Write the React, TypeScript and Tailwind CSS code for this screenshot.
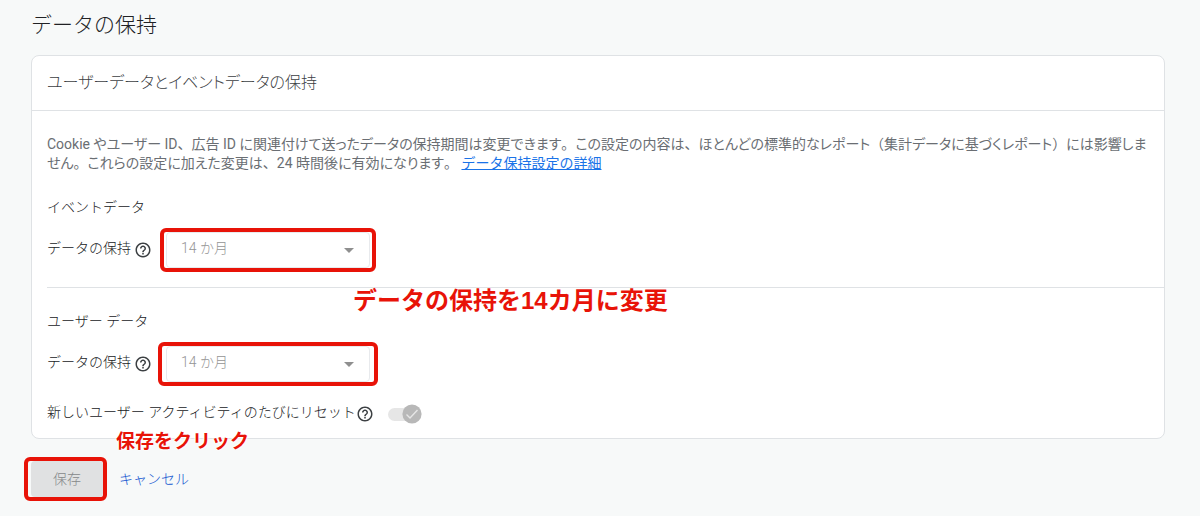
import { useState, type ReactNode } from "react";

function HelpIcon() {
  return (
    <svg
      viewBox="0 0 24 24"
      className="size-[18px] shrink-0 fill-[#3c4043]"
      aria-hidden="true"
    >
      <path d="M11 18h2v-2h-2v2zm1-16C6.48 2 2 6.48 2 12s4.48 10 10 10 10-4.48 10-10S17.52 2 12 2zm0 18c-4.41 0-8-3.59-8-8s3.59-8 8-8 8 3.59 8 8-3.59 8-8 8zm0-14c-2.21 0-4 1.79-4 4h2c0-1.1.9-2 2-2s2 .9 2 2c0 2-3 1.75-3 5h2c0-2.25 3-2.5 3-5 0-2.21-1.79-4-4-4z" />
    </svg>
  );
}

// full-width punctuation inside proportional kana text
function Wide({ children }: { children: ReactNode }) {
  return <span className="[font-feature-settings:normal]">{children}</span>;
}

type RetentionRowProps = {
  id: string;
  frame: string;
};

function RetentionRow({ id, frame }: RetentionRowProps) {
  const [months, setMonths] = useState("14");
  return (
    <div className="flex h-9 items-center">
      <label htmlFor={id} className="w-[87px] whitespace-nowrap pb-1">
        データの保持
      </label>
      <HelpIcon />
      <div className="relative ml-[14px] w-[204px]">
        <select
          id={id}
          disabled
          value={months}
          onChange={(e) => setMonths(e.target.value)}
          className="block h-9 w-full appearance-none rounded border border-[#e8eaed] bg-white pb-1 pl-[14px] text-[#949494] opacity-100"
        >
          <option value="2">2 か月</option>
          <option value="14">14 か月</option>
        </select>
        <svg
          viewBox="0 0 10 5"
          className="pointer-events-none absolute right-4 top-4 h-[5px] w-[10px] fill-[#8f8f8f]"
          aria-hidden="true"
        >
          <path d="M0 0h10L5 5z" />
        </svg>
        <div
          className={`pointer-events-none absolute rounded-md border-4 border-[#e81308] ${frame}`}
        />
      </div>
    </div>
  );
}

function ResetSwitch() {
  const [checked, setChecked] = useState(true);
  return (
    <div className="flex h-5 items-center">
      <label htmlFor="reset" className="whitespace-nowrap pb-1">
        新しいユーザー アクティビティのたびにリセット
      </label>
      <HelpIcon />
      <div className="relative ml-[14px] flex h-5 w-[34px] items-center">
        <input
          id="reset"
          type="checkbox"
          role="switch"
          disabled
          checked={checked}
          onChange={(e) => setChecked(e.target.checked)}
          className="h-[13px] w-7 appearance-none rounded-full bg-[#e6e6e6]"
        />
        <svg
          viewBox="0 0 20 20"
          className="pointer-events-none absolute right-0 top-0 size-5"
          aria-hidden="true"
        >
          <circle cx="10" cy="10" r="9.6" fill="#b8b8b8" />
          <path
            d="M4.5 10.5l3.5 3.5 7.5-8"
            fill="none"
            stroke="#e6e6e6"
            strokeWidth="1.4"
          />
        </svg>
      </div>
    </div>
  );
}

function App() {
  return (
    <div className="min-h-screen bg-[#f7f9f9] pb-4 pl-[31px] pr-[35px] pt-[9px] font-[Roboto,'Noto_Sans_CJK_JP',sans-serif] text-sm font-light text-[#202124]">
      <h1 className="text-[21px] leading-8">データの保持</h1>

      <main className="relative mt-[14px] rounded-lg border border-[#dfe2e5] bg-white">
        <h2 className="border-b border-[#dfe2e5] px-[15px] py-[15px] text-base leading-6 text-[#3c4043] [font-feature-settings:'palt']">
          ユーザーデータとイベントデータの保持
        </h2>
        <div className="pb-[14px] pl-[15px] pt-6">
          <p className="leading-[19px] font-normal text-[#6a6e73] [font-feature-settings:'palt']">
            Cookie やユーザー ID<Wide>、</Wide>広告 ID
            に関連付けて送ったデータの保持期間は変更できます<Wide>。</Wide>
            この設定の内容は<Wide>、</Wide>ほとんどの標準的なレポート
            <Wide>（</Wide>集計データに基づくレポート<Wide>）</Wide>
            には影響しま
            <br />
            せん<Wide>。</Wide>これらの設定に加えた変更は<Wide>、</Wide>24
            時間後に有効になります<Wide>。</Wide>{" "}
            <a
              href="#details"
              className="text-[#1a73e8] underline [font-feature-settings:normal]"
            >
              データ保持設定の詳細
            </a>
          </p>

          <section className="relative border-b border-[#dfe2e5] pb-[19px] pt-6">
            <h3 className="mb-[15px] leading-5">イベントデータ</h3>
            <RetentionRow id="event" frame="-inset-x-[6px] -inset-y-1" />
            <p className="absolute left-[306px] top-full whitespace-nowrap font-['Liberation_Sans','Noto_Sans_CJK_JP',sans-serif] text-2xl leading-7 font-bold text-[#e81308]">
              データの保持を14カ月に変更
            </p>
          </section>

          <section className="pt-[23px]">
            <h3 className="mb-[15px] leading-5">ユーザー データ</h3>
            <RetentionRow id="user" frame="-inset-x-2 -inset-y-1" />
            <div className="mt-[22px]">
              <ResetSwitch />
            </div>
          </section>
        </div>
        <p className="absolute -bottom-[18px] left-[84px] whitespace-nowrap text-[19px] leading-7 font-bold text-[#e81308] [text-shadow:0_0_3px_white,0_0_3px_white,0_0_3px_white]">
          保存をクリック
        </p>
      </main>

      <div className="mt-[22px] flex items-center gap-4">
        <div className="relative">
          <button
            type="button"
            disabled
            className="block h-9 w-[72px] rounded bg-[#e0e1e2] text-[#85888a]"
          >
            保存
          </button>
          <div className="pointer-events-none absolute -inset-y-1 -left-[7px] -right-1 rounded-md border-4 border-[#e81308]" />
        </div>
        <button type="button" className="text-[#1558d0]">
          キャンセル
        </button>
      </div>
    </div>
  );
}

export default App;
